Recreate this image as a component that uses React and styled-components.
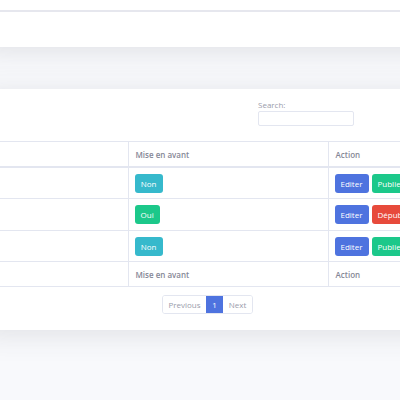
import React from 'react';
import styled, { createGlobalStyle } from 'styled-components';

const GlobalStyle = createGlobalStyle`
  html, body {
    margin: 0;
    padding: 0;
    background: #f8f9fc;
    overflow: hidden;
    font-family: "Open Sans", "Liberation Sans", sans-serif;
    color: #858796;
  }
`;

const Page = styled.div`
  width: 400px;
  height: 400px;
  overflow: hidden;
`;

const Shift = styled.div`
  margin-left: -20px;
  width: 480px;
`;

const Card = styled.div`
  background: #fff;
  box-shadow: 0 4px 28px rgba(58, 59, 69, 0.13);
  margin-top: ${({ gap }) => gap || 0}px;
`;

const CardHeader = styled.div`
  height: 10px;
  border-bottom: 2px solid #e6e7ee;
`;

const CardBody = styled.div`
  box-sizing: border-box;
  height: ${({ h }) => h}px;
  padding: ${({ pad }) => pad || '0'};
`;

const FilterRow = styled.div`
  width: 354px;
  display: flex;
  justify-content: flex-end;
`;

const SearchLabel = styled.label`
  display: flex;
  flex-direction: column;
  font-size: 8px;
  line-height: 12px;
  color: #9a9cab;
`;

const SearchInput = styled.div`
  box-sizing: border-box;
  width: 96px;
  height: 15px;
  border: 1px solid #e3e6f0;
  border-radius: 2px;
  background: #fff;
`;

const Table = styled.table`
  border-collapse: collapse;
  margin-top: 15px;
  table-layout: fixed;
  width: 448px;
  font-size: 8px;
`;

const Th = styled.th`
  height: 24px;
  padding: 0 7px;
  text-align: left;
  font-weight: 600;
  color: #858796;
  border-top: 1px solid #e3e6f0;
  border-bottom: ${({ foot }) => (foot ? '1px' : '2px')} solid #e3e6f0;
  border-left: 1px solid #e3e6f0;
  &:first-child {
    border-left: none;
  }
`;

const Td = styled.td`
  height: ${({ tall }) => (tall ? 31 : 30)}px;
  padding: 0 6px;
  border-top: 1px solid #e3e6f0;
  border-left: 1px solid #e3e6f0;
  vertical-align: middle;
  white-space: nowrap;
  &:first-child {
    border-left: none;
  }
`;

const colors = {
  primary: '#4e73df',
  success: '#1cc88a',
  info: '#36b9cc',
  danger: '#e74a3b',
};

const Btn = styled.span`
  display: inline-flex;
  align-items: center;
  justify-content: center;
  box-sizing: border-box;
  height: 19px;
  min-width: ${({ w }) => w || 0}px;
  padding: 0 6px;
  margin-right: 3px;
  border-radius: 3px;
  background: ${({ kind }) => colors[kind]};
  color: #fff;
  font-size: 8px;
`;

const Pager = styled.div`
  width: 253px;
  margin-top: 8px;
  display: flex;
  justify-content: flex-end;
`;

const PageList = styled.div`
  display: flex;
  border: 1px solid #e3e6f0;
  border-radius: 3px;
  overflow: hidden;
`;

const PageItem = styled.span`
  display: flex;
  align-items: center;
  justify-content: center;
  height: 17px;
  width: ${({ w }) => w}px;
  font-size: 8px;
  background: ${({ active }) => (active ? '#4e73df' : '#fff')};
  color: ${({ active }) => (active ? '#fff' : '#9a9cab')};
`;

const rows = [
  { featured: false },
  { featured: true, tall: true },
  { featured: false },
];

export default function App() {
  return (
    <Page>
      <GlobalStyle />
      <Shift>
        <Card>
          <CardHeader />
          <CardBody h={35} />
        </Card>
        <Card gap={42}>
          <CardBody h={241} pad="10px 0 0 20px">
            <FilterRow>
              <SearchLabel>
                Search:
                <SearchInput />
              </SearchLabel>
            </FilterRow>
            <Table>
              <colgroup>
                <col style={{ width: 128 }} />
                <col style={{ width: 200 }} />
                <col style={{ width: 120 }} />
              </colgroup>
              <thead>
                <tr>
                  <Th />
                  <Th>Mise en avant</Th>
                  <Th>Action</Th>
                </tr>
              </thead>
              <tbody>
                {rows.map((r, i) => (
                  <tr key={i}>
                    <Td tall={r.tall} />
                    <Td tall={r.tall}>
                      {r.featured ? (
                        <Btn kind="success" w={25}>Oui</Btn>
                      ) : (
                        <Btn kind="info" w={28}>Non</Btn>
                      )}
                    </Td>
                    <Td tall={r.tall}>
                      <Btn kind="primary" w={34}>Editer</Btn>
                      {r.featured ? (
                        <Btn kind="danger">Dépublier</Btn>
                      ) : (
                        <Btn kind="success">Publier</Btn>
                      )}
                    </Td>
                  </tr>
                ))}
              </tbody>
              <tfoot>
                <tr>
                  <Th foot />
                  <Th foot>Mise en avant</Th>
                  <Th foot>Action</Th>
                </tr>
              </tfoot>
            </Table>
            <Pager>
              <PageList>
                <PageItem w={43}>Previous</PageItem>
                <PageItem w={17} active>1</PageItem>
                <PageItem w={29}>Next</PageItem>
              </PageList>
            </Pager>
          </CardBody>
        </Card>
      </Shift>
    </Page>
  );
}
